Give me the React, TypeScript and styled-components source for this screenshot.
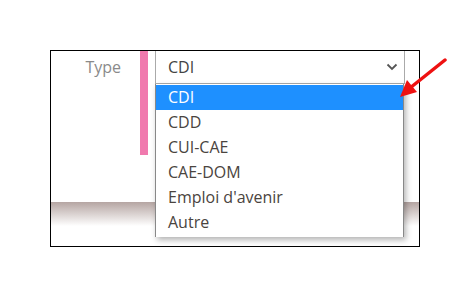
import styled, { createGlobalStyle } from "styled-components";

const GlobalStyle = createGlobalStyle`
    body {
        margin: 0;
        background: #fff;
        font-family: "Open Sans", "Noto Sans", sans-serif;
    }
`

const options = ['CDI', 'CDD', 'CUI-CAE', 'CAE-DOM', "Emploi d'avenir", 'Autre']

export default function App() {
    return (
        <StyledPage>
            <GlobalStyle/>
            <StyledFrame>
                <StyledRow>
                    <StyledLabel>Type</StyledLabel>
                    <StyledMarker/>
                    <StyledField>
                        <StyledSelect>
                            <span>CDI</span>
                            <svg width="12" height="8" viewBox="0 0 12 8">
                                <path d="M1.5 1.5 L6 6 L10.5 1.5" fill="none" stroke="#555" strokeWidth="1.8"/>
                            </svg>
                        </StyledSelect>
                        <StyledMenu>
                            {options.map((o, i) => (
                                <StyledOption key={o} selected={i === 0}>{o}</StyledOption>
                            ))}
                        </StyledMenu>
                    </StyledField>
                </StyledRow>
                <StyledBand/>
            </StyledFrame>
            <StyledArrow width="60" height="50" viewBox="0 0 60 50">
                <line x1="47" y1="2" x2="12" y2="30" stroke="#ee1111" strokeWidth="3.5" strokeLinecap="round"/>
                <polygon points="2,39 9,22 19,34" fill="#ee1111"/>
            </StyledArrow>
        </StyledPage>
    )
}

const StyledPage = styled.div`
    position: relative;
    width: 470px;
    height: 297px;
    padding: 50px 0 0 50px;
    box-sizing: border-box;
`

const StyledFrame = styled.div`
    width: 370px;
    height: 197px;
    box-sizing: border-box;
    border: 1px solid #000;
`

const StyledRow = styled.div`
    display: flex;
    align-items: flex-start;
    height: 103px;
`

const StyledLabel = styled.div`
    width: 70px;
    height: 32px;
    line-height: 32px;
    text-align: right;
    font-size: 16px;
    color: #8a8a8a;
    margin-right: 19px;
`

const StyledMarker = styled.div`
    width: 8px;
    height: 104px;
    background: #f07aae;
    margin-right: 7px;
`

const StyledField = styled.div`
    position: relative;
    width: 250px;
`

const StyledSelect = styled.div`
    height: 33px;
    box-sizing: border-box;
    border: 1px solid #aaa;
    border-top: none;
    display: flex;
    align-items: center;
    justify-content: space-between;
    padding: 0 6px 1px 12px;
    font-size: 16px;
    color: #444;
`

const StyledMenu = styled.div`
    position: absolute;
    top: 33px;
    left: 0;
    width: 249px;
    height: 153px;
    background: #fff;
    border-left: 1px solid #888;
    border-right: 1px solid #888;
    box-sizing: border-box;
    box-shadow: 2px 3px 6px rgba(0, 0, 0, 0.3);
    padding-top: 1px;
`

const StyledOption = styled.div<{ selected?: boolean }>`
    height: 25px;
    line-height: 24px;
    padding-left: 12px;
    font-size: 16px;
    color: ${p => p.selected ? '#fff' : '#4a4440'};
    background: ${p => p.selected ? '#1e90ff' : 'transparent'};
`

const StyledBand = styled.div`
    margin-top: 48px;
    height: 24px;
    background: linear-gradient(#b5a5a2, #fff);
`

const StyledArrow = styled.svg`
    position: absolute;
    left: 398px;
    top: 58px;
`
